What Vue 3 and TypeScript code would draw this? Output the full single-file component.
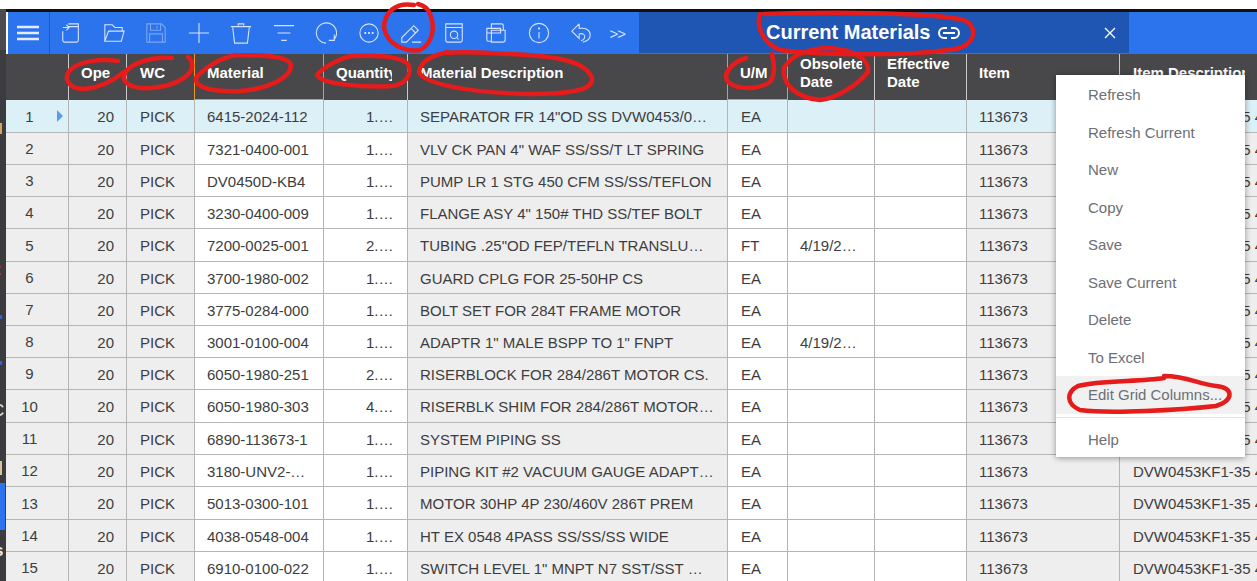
<script setup lang="ts">
interface Row {
  material: string;
  qty: string;
  desc: string;
  um: string;
  obsolete?: string;
}

const rows: Row[] = [
  { material: '6415-2024-112', qty: '1.000', desc: 'SEPARATOR FR 14"OD SS DVW0453/0453KF1', um: 'EA' },
  { material: '7321-0400-001', qty: '1.000', desc: 'VLV CK PAN 4" WAF SS/SS/T LT SPRING', um: 'EA' },
  { material: 'DV0450D-KB4', qty: '1.000', desc: 'PUMP LR 1 STG 450 CFM SS/SS/TEFLON', um: 'EA' },
  { material: '3230-0400-009', qty: '1.000', desc: 'FLANGE ASY 4" 150# THD SS/TEF BOLT', um: 'EA' },
  { material: '7200-0025-001', qty: '2.000', desc: 'TUBING .25"OD FEP/TEFLN TRANSLUCENT NATURAL', um: 'FT', obsolete: '4/19/2021' },
  { material: '3700-1980-002', qty: '1.000', desc: 'GUARD CPLG FOR 25-50HP CS', um: 'EA' },
  { material: '3775-0284-000', qty: '1.000', desc: 'BOLT SET FOR 284T FRAME MOTOR', um: 'EA' },
  { material: '3001-0100-004', qty: '1.000', desc: 'ADAPTR 1" MALE BSPP TO 1" FNPT', um: 'EA', obsolete: '4/19/2021' },
  { material: '6050-1980-251', qty: '2.000', desc: 'RISERBLOCK FOR 284/286T MOTOR CS.', um: 'EA' },
  { material: '6050-1980-303', qty: '4.000', desc: 'RISERBLK SHIM FOR 284/286T MOTORS FRAME SS', um: 'EA' },
  { material: '6890-113673-1', qty: '1.000', desc: 'SYSTEM PIPING SS', um: 'EA' },
  { material: '3180-UNV2-…', qty: '1.000', desc: 'PIPING KIT #2 VACUUM GAUGE ADAPTER ASSEMBLY', um: 'EA' },
  { material: '5013-0300-101', qty: '1.000', desc: 'MOTOR 30HP 4P 230/460V 286T PREM', um: 'EA' },
  { material: '4038-0548-004', qty: '1.000', desc: 'HT EX 0548 4PASS SS/SS/SS WIDE', um: 'EA' },
  { material: '6910-0100-022', qty: '1.000', desc: 'SWITCH LEVEL 1" MNPT N7 SST/SST MINI FLOAT', um: 'EA' },
];

// rows land on a 32.2px pitch in the original, so some are a pixel taller
const tallRows = [0, 4, 9, 12];

const menuTop = ['Refresh', 'Refresh Current', 'New', 'Copy', 'Save', 'Save Current', 'Delete', 'To Excel'];

const scribbles = [
  'M118 61C100 58 78 62 70 70C63 78 68 89 84 89C100 88 114 80 124 72',
  'M172 58C152 57 132 62 125 73C120 84 134 89 150 88C168 87 188 80 192 68C193 62 190 58 188 57',
  'M236 55C220 58 204 68 196 78C194 88 214 92 240 91C268 89 290 78 291 66C291 56 262 55 236 55',
  'M352 56C340 58 322 68 317 75C320 84 366 88 392 86C408 84 412 72 408 64C400 56 374 55 352 56',
  'M448 52C432 55 420 62 419 72C424 84 470 93 530 94C570 94 594 90 592 78C586 62 560 56 510 54C486 53 462 51 448 53',
  'M772 54C774 64 776 74 770 82C758 90 738 90 728 82C722 74 732 62 746 58',
  'M830 48C808 48 790 56 784 68C782 84 796 98 820 100C838 98 858 84 868 72C870 62 858 50 830 48',
  'M414 5C396 2 384 12 384 28C388 46 406 52 420 50C432 44 436 28 430 14C428 8 422 5 418 4',
  'M760 14C756 26 762 42 780 50C830 56 920 56 960 48C978 40 976 26 964 20C930 12 830 12 764 14',
  'M1164 378C1140 382 1100 380 1078 386C1066 392 1066 404 1080 410C1110 414 1180 410 1216 406C1234 400 1234 388 1216 386C1198 384 1186 376 1164 376',
];
</script>

<template>
  <div class="page">
    <div class="backdrop">
      <span class="peek peek-a"></span>
      <span class="peek peek-b">t</span>
      <span class="peek peek-c"></span>
      <span class="peek peek-d"></span>
      <span class="peek peek-e">C</span>
      <span class="peek peek-f"></span>
      <span class="peek peek-g"></span>
      <span class="peek peek-h">s</span>
    </div>

    <div class="window">
      <div class="topline"></div>
      <div class="toolbar">
        <div class="burger">
          <svg width="22" height="16" viewBox="0 0 22 16"><path d="M0 2h22M0 8h22M0 14h22" stroke="#e4edff" stroke-width="2.4" /></svg>
        </div>
        <div class="tools">
          <svg viewBox="0 0 24 24"><path d="M3 10v10a2 2 0 0 0 2 2h13a2 2 0 0 0 2-2V2H9M9 5h11M3 6h7M7 3l3 3-3 3" /></svg>
          <svg viewBox="0 0 24 24"><path d="M2 21V3h8l3 3h8v4M2 21h18l3-11H6z" /></svg>
          <svg class="dim" viewBox="0 0 24 24"><path d="M2 2h16l4 4v16H2zM6 2v7h11V2M13 4v3M5 22v-9h14v9" /></svg>
          <svg viewBox="0 0 24 24"><path d="M12 1v22M1 12h22" /></svg>
          <svg viewBox="0 0 24 24"><path d="M1 5h22M9 4V2h6v2M3 6l2 17h14l2-17" /></svg>
          <svg viewBox="0 0 24 24"><path d="M1 4h22M5 12h14M9 20h6" /></svg>
          <svg viewBox="0 0 24 24"><path d="M12 23A11 11 0 1 1 21 19M15 20h6v-6" /></svg>
          <svg viewBox="0 0 24 24"><circle cx="12" cy="12" r="10" /><path class="heavy" d="M7 12h2M11 12h2M15 12h2" /></svg>
          <svg viewBox="0 0 24 24"><path d="M2 22v-5L15 4l5 5L7 22zM12 7l5 5M13 22h10" /></svg>
          <svg viewBox="0 0 24 24"><path d="M3 2h18v18a2 2 0 0 1-2 2H5a2 2 0 0 1-2-2zM3 6h18" /><circle cx="12" cy="14" r="4" /><path d="M15 17l2 2" /></svg>
          <svg viewBox="0 0 24 24"><path d="M7 7V2h11a2 2 0 0 1 2 2v5M2 7h15v5H2zM2 12v7a2 2 0 0 0 2 2h3M7 9h15v10a3 3 0 0 1-3 3H7z" /></svg>
          <svg viewBox="0 0 24 24"><circle cx="12" cy="12" r="10.5" /><path d="M12 11v7" /><path class="heavy" d="M12 6v2" /></svg>
          <svg viewBox="0 0 24 24"><path d="M10 2L2 10l8 8v-5c4-1 7 1 6 4-.5 2-2 3-4 3.5M10 2v5c7-1 12 2 12 7 0 4-3 7-8 8" /></svg>
          <span class="more">&gt;&gt;</span>
        </div>
        <div class="title-bar">
          <div class="title">
            Current Materials
            <svg width="24" height="14" viewBox="0 0 24 14"><path d="M10 2H7a5 5 0 0 0 0 10h3M14 2h3a5 5 0 0 1 0 10h-3M6 7h12" fill="none" stroke="#fff" stroke-width="2" /></svg>
          </div>
          <svg class="close" width="12" height="12" viewBox="0 0 12 12"><path d="M1 1l10 10M11 1L1 11" stroke="#fff" stroke-width="1.3" /></svg>
        </div>
      </div>

      <div class="grid-row head">
        <div class="hcell"></div>
        <div class="hcell pad-ope"><span class="hlabel">Ope</span></div>
        <div class="hcell inset"><span class="hlabel">WC</span></div>
        <div class="hcell sorted"><span class="hlabel">Material</span></div>
        <div class="hcell pad-qty"><span class="hlabel">Quantity</span></div>
        <div class="hcell"><span class="hlabel">Material Description</span></div>
        <div class="hcell sorted"><span class="hlabel">U/M</span></div>
        <div class="hcell"><span class="hlabel">Obsolete Date</span></div>
        <div class="hcell"><span class="hlabel">Effective Date</span></div>
        <div class="hcell"><span class="hlabel">Item</span></div>
        <div class="hcell last inset"><span class="hlabel">Item Description</span></div>
      </div>

      <div
        v-for="(row, i) in rows"
        :key="i"
        class="grid-row body"
        :class="{ current: i === 0, tall: tallRows.includes(i) }"
      >
        <div class="cell shade num">
          <span class="num-text">{{ i + 1 }}</span>
          <span v-if="i === 0" class="pointer"></span>
        </div>
        <div class="cell shade right">20</div>
        <div class="cell shade inset">PICK</div>
        <div class="cell">{{ row.material }}</div>
        <div class="cell qty">{{ row.qty }}</div>
        <div class="cell shade desc">{{ row.desc }}</div>
        <div class="cell inset">{{ row.um }}</div>
        <div class="cell date">{{ row.obsolete }}</div>
        <div class="cell"></div>
        <div class="cell shade">113673</div>
        <div class="cell shade last inset">DVW0453KF1-35 450 CFM</div>
      </div>
    </div>

    <div class="menu">
      <div v-for="item in menuTop" :key="item" class="menu-item">{{ item }}</div>
      <div class="menu-item hover">Edit Grid Columns...</div>
      <div class="menu-sep"></div>
      <div class="menu-item help">Help</div>
    </div>

    <svg class="marks" width="1257" height="581" viewBox="0 0 1257 581">
      <path v-for="(d, i) in scribbles" :key="i" :d="d" />
    </svg>
  </div>
</template>

<style>
html,
body {
  margin: 0;
  background: #fff;
  overflow: hidden;
}
</style>

<style scoped>
.page {
  position: relative;
  display: flex;
  width: 1257px;
  height: 581px;
  overflow: hidden;
  background: #fff;
  font-family: "Liberation Sans", Arial, sans-serif;
  font-size: 15px;
  color: #3d3d40;
}

.backdrop {
  position: relative;
  flex: 0 0 6px;
  margin-top: 9px;
  background: linear-gradient(#4b4b4f 0, #4b4b4f 41px, #3c3b40 41px);
  overflow: hidden;
}

.peek {
  position: absolute;
  left: 0;
  display: block;
  overflow: hidden;
}
.peek-a { top: 114px; width: 2px; height: 11px; background: #d9a25e; }
.peek-b { top: 251px; left: -5px; color: #e0382f; font-size: 17px; font-weight: 700; }
.peek-c { top: 306px; width: 2px; height: 4px; background: #2f63d8; }
.peek-d { top: 352px; width: 2px; height: 4px; background: #2f63d8; }
.peek-e { top: 392px; left: -8px; color: #e8e8e8; font-size: 17px; }
.peek-f { top: 452px; width: 2px; height: 14px; background: #d8c49a; }
.peek-g { top: 474px; width: 5px; height: 47px; background: #2c73ee; }
.peek-h { top: 532px; left: -6px; color: #e8e8e8; font-size: 17px; font-weight: 700; }

.window {
  flex: 1;
  min-width: 0;
  padding-top: 9px;
}

.topline {
  height: 3px;
  margin-left: -1px;
  background: #111;
}

.toolbar {
  display: flex;
  height: 42px;
  margin-left: 2px;
  background: #2c73ee;
}

.burger {
  display: flex;
  flex: 0 0 42px;
  align-items: center;
  justify-content: center;
  padding-right: 1px;
  border-right: 1px solid #1f58bd;
  box-sizing: border-box;
}

.tools {
  display: flex;
  flex: 0 0 589px;
  align-items: center;
  gap: 20.5px;
  padding-left: 10px;
  box-sizing: border-box;
}

.tools svg {
  flex: 0 0 22px;
  width: 22px;
  height: 22px;
  fill: none;
  stroke: #d6e3fb;
  stroke-width: 1.2;
}

.tools svg.dim {
  stroke: #7ba6f2;
}

.tools .heavy {
  stroke-width: 2.2;
}

.more {
  margin-left: -3px;
  color: #d6e3fb;
  font-size: 15px;
  letter-spacing: -1px;
}

.title-bar {
  display: flex;
  flex: 0 0 490px;
  align-items: center;
  height: 41px;
  padding-left: 127px;
  box-sizing: border-box;
  background: #1f55b3;
}

.title {
  display: flex;
  align-items: center;
  gap: 6px;
  width: 338px;
  color: #fff;
  font-size: 20px;
  font-weight: 700;
}

.close {
  flex: none;
}

.grid-row {
  display: grid;
  grid-template-columns: 63px 58px 68px 129px 84px 320px 60px 87px 92px 153px 1fr;
}

.head {
  height: 46px;
  background: #484749;
  color: #fff;
  font-weight: 700;
  line-height: 18px;
}

.hcell {
  display: flex;
  align-items: center;
  min-width: 0;
  padding: 0 12px 8px;
  border-right: 1px solid #c9c9c9;
  box-sizing: border-box;
}

.hcell.inset {
  padding-left: 13px;
}

.hlabel {
  min-width: 0;
  overflow: hidden;
}

.hcell.sorted {
  padding-left: 12px;
  border: 1px solid #e9982c;
  border-top: 0;
  margin-left: -1px;
}

.hcell.pad-ope {
  padding-left: 12px;
}

.hcell.pad-qty {
  padding-right: 15px;
  white-space: nowrap;
}

.hcell.last {
  border-right: 0;
  white-space: nowrap;
}

.body {
  height: 32px;
}

.body.tall {
  height: 33px;
}

.cell {
  min-width: 0;
  padding: 0 12px;
  border-right: 1px solid #b5b5b5;
  border-bottom: 1px solid #b5b5b5;
  box-sizing: border-box;
  background: #fff;
  line-height: 33px;
  white-space: nowrap;
  overflow: hidden;
  text-overflow: ellipsis;
}

.cell.inset {
  padding-left: 13px;
}

.cell.shade {
  background: #eee;
}

.current .cell,
.current .cell.shade {
  background: #dbf0f7;
}

.cell.right {
  padding-right: 12px;
  text-align: right;
}

.cell.num {
  display: flex;
  align-items: center;
  padding: 0;
}

.num-text {
  width: 47px;
  text-align: center;
}

.pointer {
  width: 0;
  height: 0;
  margin-left: 4px;
  border-top: 6px solid transparent;
  border-bottom: 6px solid transparent;
  border-left: 6px solid #5b9be8;
}

.cell.qty {
  padding: 0 13px 0 42px;
}

.cell.desc {
  padding-right: 13px;
}

.cell.date {
  padding-right: 16px;
}

.cell.last {
  border-right: 0;
  padding-right: 0;
  text-overflow: clip;
}

.menu {
  position: absolute;
  top: 75px;
  left: 1056px;
  width: 189px;
  padding-top: 1px;
  box-sizing: border-box;
  background: #fff;
  box-shadow: 0 1px 6px rgba(0, 0, 0, 0.4);
  color: #6c6f75;
}

.menu-item {
  height: 37.5px;
  padding-left: 32px;
  line-height: 37.5px;
}

.menu-item.hover {
  background: #f1f1f1;
}

.menu-item.help {
  height: 34px;
  line-height: 34px;
}

.menu-sep {
  height: 1px;
  margin: 3px 0 5px;
  background: #e4e4e4;
}

.marks {
  position: absolute;
  top: 0;
  left: 0;
  pointer-events: none;
}

.marks path {
  fill: none;
  stroke: #e61b1b;
  stroke-width: 4.5;
  stroke-linecap: round;
  stroke-linejoin: round;
}
</style>
